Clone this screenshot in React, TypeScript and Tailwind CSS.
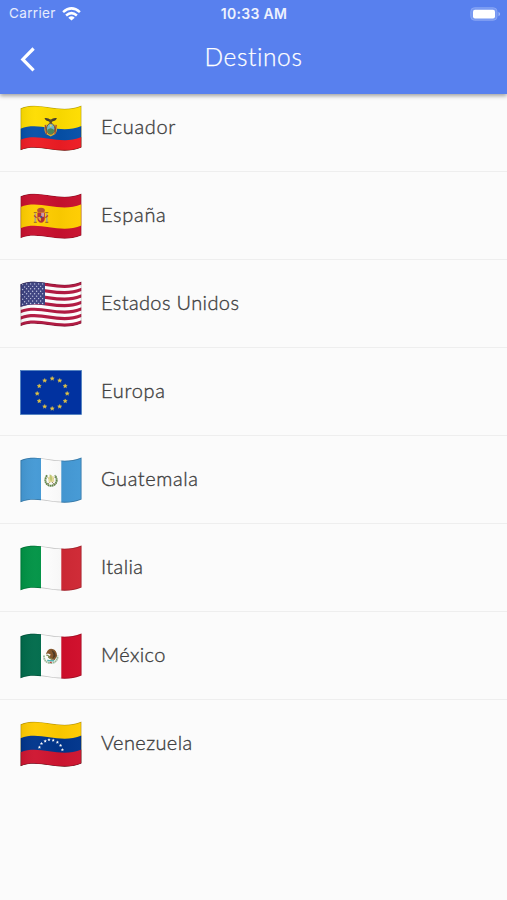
import React from "react";

function band(a: number, b: number) {
  return `M.5 ${3.2 + a}C20 ${-4.5 + a} 40 ${9.6 + a} 61.5 ${0.4 + a}V${0.4 + b}C40 ${9.6 + b} 20 ${-4.5 + b} .5 ${3.2 + b}Z`;
}

type FlagProps = { id: string; edge?: string; children: React.ReactNode };

function WavingFlag({ id, edge = "#00000038", children }: FlagProps) {
  return (
    <svg className="block h-[46px] w-[62px] shrink-0" viewBox="0 0 62 46">
      <defs>
        <clipPath id={id}>
          <path d={band(0, 42)} />
        </clipPath>
        <linearGradient id={`${id}-shade`}>
          <stop offset="0" stopColor="#000" stopOpacity=".06" />
          <stop offset=".25" stopColor="#fff" stopOpacity=".03" />
          <stop offset=".65" stopColor="#000" stopOpacity=".03" />
          <stop offset="1" stopColor="#fff" stopOpacity=".02" />
        </linearGradient>
      </defs>
      <g clipPath={`url(#${id})`}>
        {children}
        <path d={band(0, 42)} fill={`url(#${id}-shade)`} stroke={edge} strokeWidth="1.6" />
      </g>
    </svg>
  );
}

function Vertical({ left, right }: { left: string; right: string }) {
  return (
    <>
      <rect width="62" height="46" fill="#fff" />
      <rect width="21" height="46" fill={left} />
      <rect x="41.3" width="21" height="46" fill={right} />
    </>
  );
}

function Ecuador() {
  return (
    <WavingFlag id="ec">
      <path d={band(0, 42)} fill="#fedd00" />
      <path d={band(20.5, 42)} fill="#0650a8" />
      <path d={band(31.5, 42)} fill="#ed1c24" />
      <path d="M24.5 13.1q3.5-.8 6.2 1.8 2.3-2.6 6.2-1.8-1.2 3.2-4.6 3.4l-1.6 1-1.6-1q-3.4-.2-4.6-3.4Z" fill="#47412c" />
      <path d="M29 14.5h3.4l-.7 4h-2Z" fill="#5d4b24" />
      <path d="M25 19.6q-1.6 6 1 9.5l4.7 2.5 4.7-2.5q2.6-3.5 1-9.5Z" fill="#d9b52f" />
      <path d="M25.2 20l.8 5 .4 4M36.2 20l-.8 5-.4 4" stroke="#a33a35" strokeWidth="1.1" fill="none" />
      <ellipse cx="30.7" cy="23.8" rx="4.2" ry="5.4" fill="#75b8c9" stroke="#735229" />
      <path d="M27.2 25q3.3-3.5 7 0-.5 3.7-3.5 4-3-.4-3.5-4Z" fill="#4b8857" />
      <circle cx="30.8" cy="20.7" r="1" fill="#f6d84b" />
    </WavingFlag>
  );
}

function Spain() {
  return (
    <WavingFlag id="es">
      <path d={band(0, 42)} fill="#c8102e" />
      <path d={band(10.8, 32)} fill="#ffcd00" />
      <path d="M15.3 20.5v8.5M26.8 20.5v8.5" stroke="#a9a083" strokeWidth="1.6" />
      <path d="M14 22.5l2.6 2.2M28 22.5l-2.6 2.2" stroke="#b33c31" strokeWidth="1.2" />
      <path d="M13.8 19.5h3M25.3 19.5h3M13.8 29.3h3M25.3 29.3h3" stroke="#a66a24" strokeWidth="1.2" />
      <path d="M17.2 18.2q-.6-3.2 3.8-3.5 4.5.3 3.8 3.5l-1 1h-5.5Z" fill="#b65033" />
      <path d="M17.4 19.4h7.4v6.3q-.5 3.7-3.7 4-3.2-.3-3.7-4Z" fill="#b52b34" />
      <path d="M21.2 19.8H24v4h-2.8Z" fill="#c99cae" />
      <path d="M18.2 24h2.8v4q-2.3-.4-2.8-3Z" fill="#e1a532" />
      <path d="M21.4 24H24q.3 3-2.6 4Z" fill="#a92c32" />
      <circle cx="21.2" cy="24" r="1.1" fill="#32518c" />
    </WavingFlag>
  );
}

function UnitedStates() {
  const dots = [];
  for (let r = 0; r < 9; r++) {
    for (let c = 0; c < (r % 2 ? 5 : 6); c++) {
      dots.push(
        <circle key={`${r}-${c}`} cx={2.6 + c * 4 + (r % 2) * 2} cy={3.6 + r * 2.45 - (c === 0 ? 0 : 0.7)} r=".7" fill="#c3c8e2" />,
      );
    }
  }
  return (
    <WavingFlag id="us">
      <path d={band(0, 42)} fill="#fff" />
      {[0, 2, 4, 6, 8, 10, 12].map((i) => (
        <path key={i} d={band((i * 42) / 13, ((i + 1) * 42) / 13)} fill="#b31942" />
      ))}
      <path d="M0 0H25V24Q11 22 0 26Z" fill="#3c4180" />
      {dots}
    </WavingFlag>
  );
}

function Europe() {
  return (
    <svg className="block h-[46px] w-[62px] shrink-0" viewBox="0 0 62 46">
      <rect x=".5" y="1.5" width="61" height="44" fill="#0132a0" stroke="#477cbd" strokeWidth=".7" />
      {Array.from({ length: 12 }, (_, i) => {
        const a = (i * Math.PI) / 6;
        const cx = 32.2 + 15 * Math.sin(a);
        const cy = 24.5 - 15 * Math.cos(a);
        return (
          <path
            key={i}
            transform={`translate(${cx} ${cy})`}
            d="M0-2.1.6-.7 2.1-.6.9.4 1.3 1.8 0 1-1.3 1.8-.9.4-2.1-.6-.6-.7Z"
            fill="#e3c444"
            stroke="#e3c444"
            strokeWidth=".4"
          />
        );
      })}
    </svg>
  );
}

function Guatemala() {
  return (
    <WavingFlag id="gt">
      <Vertical left="#4499d5" right="#4499d5" />
      <path d="M27 18.2q-3.6 6 .6 9.5 3.3 2.2 6.8 0 4.2-3.6.6-9.5" fill="none" stroke="#638649" strokeWidth="2" strokeDasharray="1.7 .4" />
      <path d="M27.6 20.5l6.8 7M34.4 20.5l-6.8 7" stroke="#8b7951" strokeWidth=".9" />
      <path d="M28 20l5.5-1 .8 5.7-5.6 1Z" fill="#eadf9e" />
      <path d="M29.5 17.5l2 .4.7 4-1 3-1.4-3Z" fill="#c3ca73" />
    </WavingFlag>
  );
}

function Italy() {
  return (
    <WavingFlag id="it">
      <Vertical left="#009345" right="#cf2834" />
    </WavingFlag>
  );
}

function Mexico() {
  return (
    <WavingFlag id="mx">
      <Vertical left="#006b4b" right="#d00d2a" />
      <path d="M24 22.5q-.4 7 6.6 7.6 7.3-.5 7-7.5" fill="none" stroke="#9dbb9a" strokeWidth="1.8" strokeDasharray="1.7 .5" />
      <path d="M27.5 17.8q2-2.7 5-1.7 4.3 1.2 4.6 6.8l-2.4 4-3.8-.4-3-2.2 3-2.5-2.8-1.2-2.3.5Z" fill="#86572c" />
      <path d="M31.5 17q4 1.5 4 6.2l-3 2.5 1-4Z" fill="#4e3a25" />
      <path d="M26.3 22.2q3 .3 2.8 2.5l3 1.6" stroke="#819055" strokeWidth="1.2" fill="none" />
      <path d="M27.3 27.2q3.4 1.3 6.8 0" stroke="#52b5b1" strokeWidth="1.5" fill="none" />
      <path d="M29.9 29.3h1.8" stroke="#c54242" strokeWidth="1.2" />
    </WavingFlag>
  );
}

function Venezuela() {
  const stars = [[19.4, 26.2], [21.5, 22.5], [25.2, 20.1], [29, 18.8], [33.2, 19.3], [37.4, 21.2], [40.6, 24.4], [42.4, 28.8]];
  return (
    <WavingFlag id="ve">
      <path d={band(0, 42)} fill="#fecb00" />
      <path d={band(14, 42)} fill="#00358c" />
      <path d={band(28, 42)} fill="#cf1530" />
      {stars.map(([x, y]) => (
        <path key={x} transform={`translate(${x} ${y}) scale(.8)`} d="M0-2.1.6-.7 2.1-.6.9.4 1.3 1.8 0 1-1.3 1.8-.9.4-2.1-.6-.6-.7Z" fill="#fff" />
      ))}
    </WavingFlag>
  );
}

const destinations = [
  { name: "Ecuador", Flag: Ecuador, tracking: "tracking-[0.65px]" },
  { name: "España", Flag: Spain, tracking: "tracking-[0.7px]" },
  { name: "Estados Unidos", Flag: UnitedStates, tracking: "tracking-[0.38px]" },
  { name: "Europa", Flag: Europe, tracking: "tracking-[0.7px]" },
  { name: "Guatemala", Flag: Guatemala, tracking: "tracking-[0.6px]" },
  { name: "Italia", Flag: Italy, tracking: "tracking-[0.4px]" },
  { name: "México", Flag: Mexico, tracking: "tracking-[0.4px]" },
  { name: "Venezuela", Flag: Venezuela, tracking: "tracking-[0.4px]" },
];

export default function App() {
  return (
    <div className="flex h-[900px] w-full flex-col overflow-hidden bg-[#fbfbfb] font-['Lato',sans-serif]">
      <header className="relative z-10 h-[94px] shrink-0 bg-[#5880ee] text-white shadow-[0_2px_4px_rgba(0,0,0,0.36)]">
        <div className="grid h-[27px] grid-cols-3 items-center pl-[9px] pr-[6px] font-['Inter',sans-serif]">
          <div className="flex items-center gap-[6px]">
            <span className="text-[13.5px] leading-[27px] tracking-[0.35px] text-white/85">Carrier</span>
            <svg className="h-[14px] w-[19px]" viewBox="0 0 19 14" fill="none" stroke="#fff" strokeWidth="2.5">
              <path d="M1.1 5.1Q9.5-2.4 17.9 5.1" />
              <path d="M4.1 8.5Q9.5 3.7 14.9 8.5" />
              <path d="M9.5 13.6 6.3 10.7Q9.5 8 12.7 10.7Z" fill="#fff" stroke="none" />
            </svg>
          </div>
          <span className="-ml-[2px] whitespace-nowrap text-center text-[14px] font-semibold leading-[27px] tracking-[0.3px] text-white/90">10:33 AM</span>
          <svg className="h-[14px] w-[31px] justify-self-end" viewBox="0 0 31 14">
            <rect x=".8" y=".8" width="26.2" height="12.4" rx="3.6" fill="#7798f2" stroke="#88a5f4" />
            <rect x="3" y="2.8" width="22" height="8.6" rx="2" fill="#fff" />
            <path d="M28.5 4.7q3.3 2.3 0 4.6Z" fill="#a3b8f6" />
          </svg>
        </div>
        <div className="grid h-[64px] grid-cols-[60px_1fr_60px] items-center">
          <svg className="ml-[20px] h-[26px] w-[16px]" viewBox="0 0 16 26" fill="none" stroke="#fff" strokeWidth="3.2">
            <path d="M13.6 2.5 2.8 13.4l10.8 10.9" />
          </svg>
          <h1 className="pb-[4px] text-center text-[24.5px] font-light leading-[60px] tracking-[0.6px] text-white [-webkit-text-stroke:0.25px_#ffffff]">Destinos</h1>
        </div>
      </header>
      <main className="-mt-[10px]">
        <ul>
          {destinations.map(({ name, Flag, tracking }, i) => (
            <li
              key={name}
              className={`flex h-[88px] items-center gap-[19px] border-b pl-[20px] ${i < destinations.length - 1 ? "border-[#eeeeee]" : "border-transparent"}`}
            >
              <Flag />
              <span className={`pb-[3px] text-[20px] font-light leading-[24px] text-[#404040] [-webkit-text-stroke:0.35px_#404040] ${tracking}`}>{name}</span>
            </li>
          ))}
        </ul>
      </main>
    </div>
  );
}
